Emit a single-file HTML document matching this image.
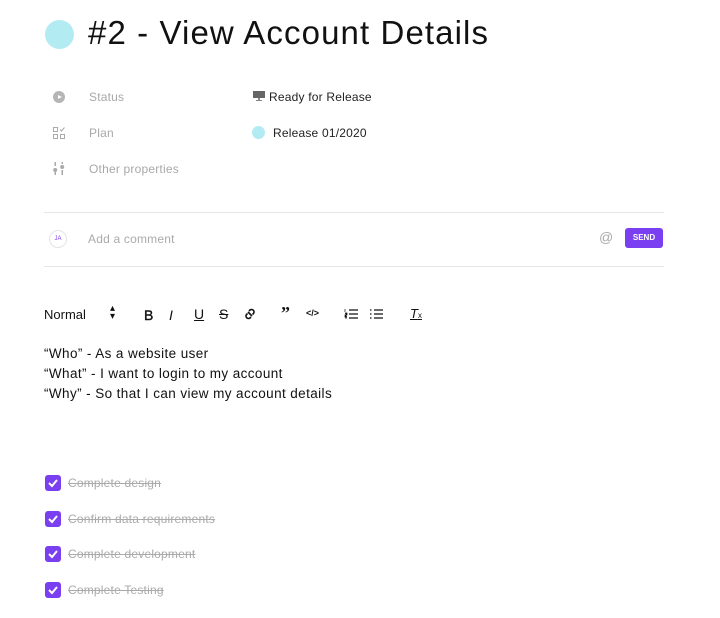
<!DOCTYPE html>
<html><head><meta charset="utf-8"><style>
body{margin:0;width:720px;height:618px;background:#fff;font-family:"Liberation Sans",sans-serif;position:relative;overflow:hidden;color:#111}
.a{position:absolute;white-space:nowrap}
.lbl{font-size:12px;color:#a8a8a8;letter-spacing:.2px}
.val{font-size:12px;color:#222;letter-spacing:.2px}
.cb{position:absolute;left:45px;width:16px;height:16px;background:#7a3ff0;border-radius:3px}
.cb svg{position:absolute;left:2px;top:3px}
.ct{font-size:12px;color:#aaa;text-decoration:line-through;left:68px;letter-spacing:.2px}
.tb{font-size:13px;color:#111;position:absolute}
.body{font-size:13.5px;color:#111;left:44px;letter-spacing:.4px}
</style></head><body>
<div class="a" style="left:45px;top:20px;width:29px;height:29px;border-radius:50%;background:#b3ebf2"></div>
<div class="a" style="left:88px;top:14px;font-size:33px;letter-spacing:1.1px;color:#111">#2 - View Account Details</div>

<div class="a" style="left:53px;top:91px;width:12px;height:12px;border-radius:50%;background:#b5b5b5"></div>
<div class="a" style="left:58px;top:94.5px;width:0;height:0;border-left:4px solid #fff;border-top:2.5px solid transparent;border-bottom:2.5px solid transparent"></div>
<div class="a lbl" style="left:89px;top:90px">Status</div>
<svg class="a" style="left:253px;top:90px" width="12" height="12"><rect x="0" y="1" width="12" height="7" fill="#666"/><rect x="5" y="8" width="2" height="2" fill="#888"/><rect x="3" y="10" width="6" height="1" fill="#888"/></svg>
<div class="a val" style="left:269px;top:90px">Ready for Release</div>

<svg class="a" style="left:53px;top:127px" width="12" height="12" fill="none" stroke="#aaa" stroke-width="1"><rect x="0.5" y="0.5" width="4" height="4"/><rect x="0.5" y="7.5" width="4" height="4"/><rect x="7.5" y="7.5" width="4" height="4"/><path d="M7 2.5l1.5 1.5 3-3.5"/></svg>
<div class="a lbl" style="left:89px;top:126px">Plan</div>
<div class="a" style="left:252px;top:126px;width:13px;height:13px;border-radius:50%;background:#b3ebf2"></div>
<div class="a val" style="left:273px;top:126px">Release 01/2020</div>

<svg class="a" style="left:53px;top:162px" width="12" height="13" fill="#aaa"><rect x="1.5" y="0" width="1.5" height="4"/><circle cx="2.2" cy="8" r="2"/><rect x="1.5" y="10" width="1.5" height="3"/><rect x="8.5" y="0" width="1.5" height="2"/><circle cx="9.2" cy="5" r="2"/><rect x="8.5" y="8" width="1.5" height="5"/></svg>
<div class="a lbl" style="left:89px;top:162px">Other properties</div>

<div class="a" style="left:44px;top:212px;width:620px;height:1px;background:#e6e6e6"></div>
<div class="a" style="left:49px;top:230px;width:18px;height:18px;border-radius:50%;border:1px solid #e4e4e4;box-sizing:border-box;font-size:6px;color:#7a3ff0;text-align:center;line-height:16px">JA</div>
<div class="a" style="left:88px;top:232px;font-size:12px;color:#aaa;letter-spacing:.2px">Add a comment</div>
<div class="a" style="left:599px;top:229px;font-size:14px;color:#aaa">@</div>
<div class="a" style="left:625px;top:228px;width:38px;height:20px;background:#7a3ff0;border-radius:3px;color:#fff;font-size:8px;font-weight:bold;text-align:center;line-height:20px">SEND</div>
<div class="a" style="left:44px;top:266px;width:620px;height:1px;background:#e6e6e6"></div>

<div class="tb" style="left:44px;top:307px">Normal</div>
<div class="tb" style="left:110px;top:305px;font-size:10px;line-height:8px">▴<br>▾</div>
<div class="tb" style="left:144px;top:307px;font-size:14px;-webkit-text-stroke:.4px #111">B</div>
<div class="tb" style="left:169px;top:307px;font-style:italic;font-size:14px">I</div>
<div class="tb" style="left:194px;top:306px;text-decoration:underline;font-size:14px">U</div>
<div class="tb" style="left:219px;top:306px;text-decoration:line-through;font-size:14px">S</div>
<svg class="a" style="left:243px;top:307px" width="14" height="14" fill="none" stroke="#111" stroke-width="1.6"><path d="M6 4l1-1a2.5 2.5 0 0 1 3.5 3.5l-1 1M8 10l-1 1a2.5 2.5 0 0 1-3.5-3.5l1-1M5 5l4 4"/></svg>
<div class="tb" style="left:281px;top:303px;font-weight:bold;font-size:18px;font-family:'Liberation Serif',serif">”</div>
<div class="tb" style="left:306px;top:308px;font-size:9px;font-weight:bold">&lt;/&gt;</div>
<svg class="a" style="left:344px;top:308px" width="14" height="12" stroke="#111" stroke-width="1.3"><path d="M5 2h9M5 6h9M5 10h9"/><path d="M1 1v3M1 5h2v2H1v2h2M1 10h2" stroke-width=".7"/></svg>
<svg class="a" style="left:369px;top:308px" width="14" height="12" stroke="#111" stroke-width="1.3"><path d="M5 2h9M5 6h9M5 10h9M1 2h1.5M1 6h1.5M1 10h1.5"/></svg>
<div class="tb" style="left:410px;top:306px;font-style:italic;text-decoration:underline;font-size:13px">T<span style="font-size:8px;font-style:normal;text-decoration:none">x</span></div>

<div class="a body" style="top:346px">“Who” - As a website user</div>
<div class="a body" style="top:366px">“What” - I want to login to my account</div>
<div class="a body" style="top:386px">“Why” - So that I can view my account details</div>

<div class="cb" style="top:475px"><svg width="12" height="10" fill="none" stroke="#fff" stroke-width="2"><path d="M2 5l3 3 5-6"/></svg></div>
<div class="a ct" style="top:476px">Complete design</div>
<div class="cb" style="top:511px"><svg width="12" height="10" fill="none" stroke="#fff" stroke-width="2"><path d="M2 5l3 3 5-6"/></svg></div>
<div class="a ct" style="top:512px">Confirm data requirements</div>
<div class="cb" style="top:546px"><svg width="12" height="10" fill="none" stroke="#fff" stroke-width="2"><path d="M2 5l3 3 5-6"/></svg></div>
<div class="a ct" style="top:547px">Complete development</div>
<div class="cb" style="top:582px"><svg width="12" height="10" fill="none" stroke="#fff" stroke-width="2"><path d="M2 5l3 3 5-6"/></svg></div>
<div class="a ct" style="top:583px">Complete Testing</div>
</body></html>
